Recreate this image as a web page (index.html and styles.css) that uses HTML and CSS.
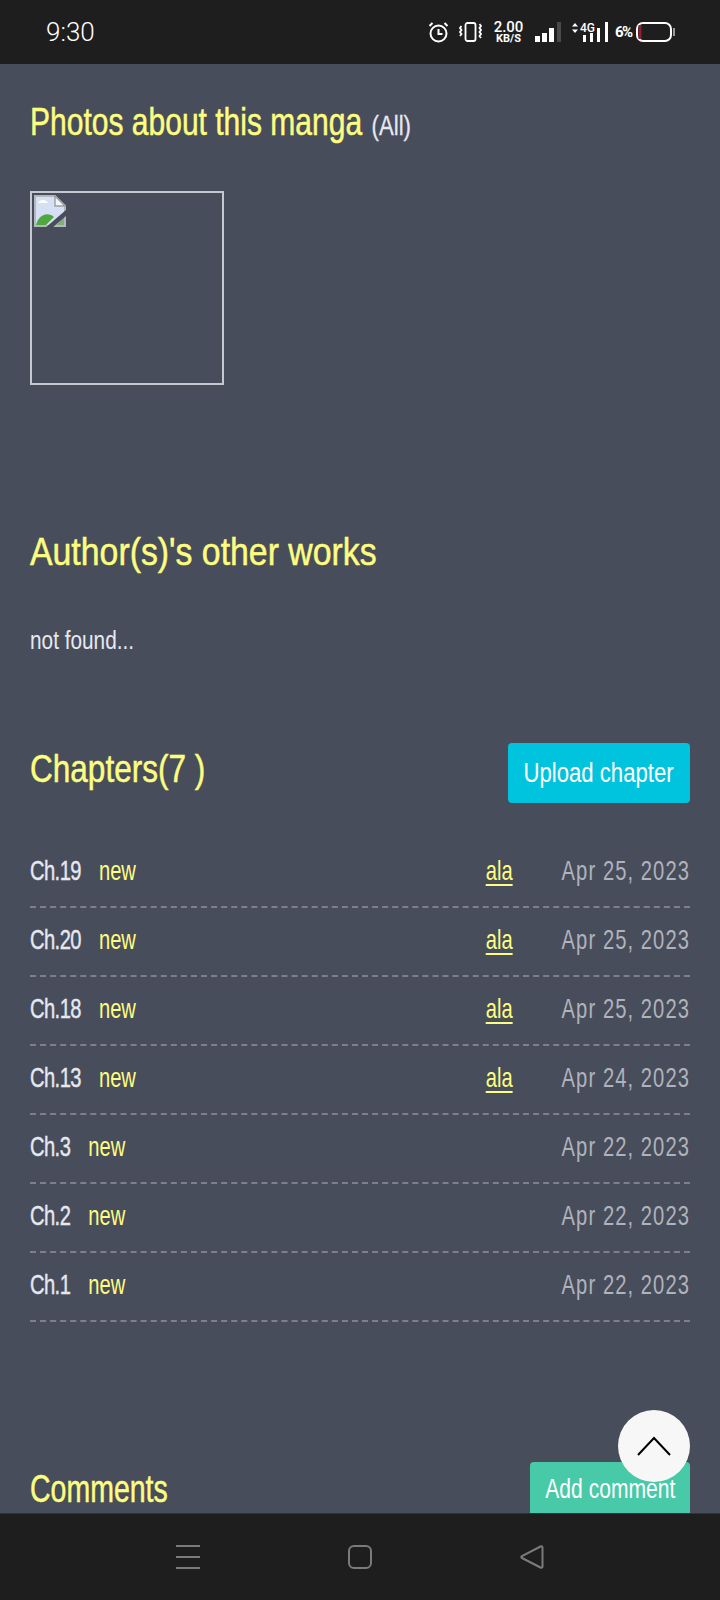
FILE: index.html
```html
<!DOCTYPE html>
<html lang="en">
<head>
    <meta charset="UTF-8">
    <meta name="viewport" content="width=device-width, initial-scale=1.0">
    <title>Manga details</title>
    <link rel="stylesheet" href="styles.css">
</head>
<body>
    <div class="phone">
        <div class="status-bar">
            <span class="clock">9:30</span>
            <div class="status-icons">
                <svg class="ic-alarm" width="21" height="22" viewBox="0 0 21 22" fill="none" stroke="#fff" stroke-width="2">
                    <circle cx="10.500" cy="12.500" r="8"/>
                    <path d="M10.500 8v5h4M1.500 5l3-3M19.500 5l-3-3"/>
                </svg>
                <svg class="ic-vibrate" width="23" height="20" viewBox="0 0 23 20" fill="none" stroke="#fff" stroke-width="1.800">
                    <rect x="6.500" y="1" width="10" height="18" rx="2"/>
                    <path d="M2.500 4l-1.500 2 1.500 2-1.500 2 1.500 2-1.500 2M20.500 2l1.500 2-1.500 2 1.500 2-1.500 2 1.500 2-1.500 2 1.500 2"/>
                </svg>
                <div class="speed"><span class="speed-value">2.00</span><span class="speed-unit">KB/S</span></div>
                <svg class="ic-signal" width="26" height="20" viewBox="0 0 26 20" fill="#fff">
                    <rect x="0" y="14" width="5" height="6"/>
                    <rect x="7" y="11" width="5" height="9"/>
                    <rect x="14" y="6" width="5" height="14"/>
                    <rect x="22" y="0" width="4" height="20" fill="#4a4a4a"/>
                </svg>
                <div class="net">
                    <svg width="6" height="10" viewBox="0 0 6 10" fill="#fff">
                        <path d="M3 0l3 3.500H0zM3 10L0 6.500h6z"/>
                    </svg>
                    <span class="net-label">4G</span>
                    <svg class="net-bars" width="26" height="20" viewBox="0 0 26 20" fill="#fff">
                        <rect x="0" y="13" width="3" height="7"/>
                        <rect x="7" y="11" width="3" height="9"/>
                        <rect x="14" y="6" width="3" height="14"/>
                        <rect x="22" y="0" width="3" height="20"/>
                    </svg>
                </div>
                <span class="batt-text">6%</span>
                <svg class="ic-batt" width="39" height="20" viewBox="0 0 39 20" fill="none">
                    <rect x="1" y="1" width="34" height="18" rx="6" stroke="#fff" stroke-width="2"/>
                    <rect x="2.500" y="3" width="3" height="14" fill="#8a1f35"/>
                    <rect x="37" y="6" width="2" height="8" fill="#999"/>
                </svg>
            </div>
        </div>

        <div class="content">
            <h2 class="title photos-title">Photos about this manga<small class="all-link">(All)</small></h2>
            <div class="photo-box">
                <svg width="32" height="32" viewBox="0 0 16 16">
                    <path d="M.5.5h10l5 5v10H.5z" fill="#d5e0f5" stroke="#b4b7bb"/>
                    <path d="M10.500.5l5 5h-5z" fill="#f2f4f7" stroke="#9a9da3" stroke-width=".7"/>
                    <path d="M2 4c1-2 4-2 5 0z" fill="#fff"/>
                    <path d="M1 15c1-5 6-7 9-4l-4 4z" fill="#4fa83d"/>
                    <path d="M11 15l4-4v4z" fill="#7fb07a"/>
                    <path d="M5.500 16.500L16 7.500v3l-7 6z" fill="#484d5c"/>
                </svg>
            </div>

            <h2 class="title author-title">Author(s)'s other works</h2>
            <p class="not-found">not found...</p>

            <div class="section-head chapters-head">
                <h2 class="title chapters-title">Chapters(7 )</h2>
                <a class="btn btn-upload" href="#"><span class="btn-text">Upload chapter</span></a>
            </div>

            <ul class="chapters">
                <li class="chapter"><div class="ch-line"><span class="ch-name">Ch.19</span><span class="ch-new">new</span><a class="ch-user" href="#">ala</a><span class="ch-date">Apr 25, 2023</span></div></li>
                <li class="chapter"><div class="ch-line"><span class="ch-name">Ch.20</span><span class="ch-new">new</span><a class="ch-user" href="#">ala</a><span class="ch-date">Apr 25, 2023</span></div></li>
                <li class="chapter"><div class="ch-line"><span class="ch-name">Ch.18</span><span class="ch-new">new</span><a class="ch-user" href="#">ala</a><span class="ch-date">Apr 25, 2023</span></div></li>
                <li class="chapter"><div class="ch-line"><span class="ch-name">Ch.13</span><span class="ch-new">new</span><a class="ch-user" href="#">ala</a><span class="ch-date">Apr 24, 2023</span></div></li>
                <li class="chapter"><div class="ch-line"><span class="ch-name">Ch.3</span><span class="ch-new">new</span><span class="ch-date">Apr 22, 2023</span></div></li>
                <li class="chapter"><div class="ch-line"><span class="ch-name">Ch.2</span><span class="ch-new">new</span><span class="ch-date">Apr 22, 2023</span></div></li>
                <li class="chapter"><div class="ch-line"><span class="ch-name">Ch.1</span><span class="ch-new">new</span><span class="ch-date">Apr 22, 2023</span></div></li>
            </ul>

            <div class="section-head comments-head">
                <h2 class="title comments-title">Comments</h2>
                <a class="btn btn-comment" href="#"><span class="btn-text">Add comment</span></a>
            </div>

            <a class="to-top" href="#">
                <svg width="34" height="20" viewBox="0 0 34 20" fill="none" stroke="#000" stroke-width="2">
                    <path d="M1 19L17 2l16 17"/>
                </svg>
            </a>
        </div>

        <div class="nav-bar">
            <svg width="24" height="24" viewBox="0 0 24 24" stroke="#7b7b7b" stroke-width="2">
                <path d="M0 1h24M0 12h24M0 23h24"/>
            </svg>
            <svg width="24" height="24" viewBox="0 0 24 24" fill="none" stroke="#7b7b7b" stroke-width="2">
                <rect x="1" y="1" width="22" height="22" rx="5"/>
            </svg>
            <svg width="24" height="24" viewBox="0 0 24 24" fill="none" stroke="#7b7b7b" stroke-width="2">
                <path d="M22.500 2.500c0-1-1-1.500-2-1L2 11c-1 .6-1 1.500 0 2l18.500 9.500c1 .5 2 0 2-1z"/>
            </svg>
        </div>
    </div>
</body>
</html>
```

FILE: styles.css
```css
* {
    box-sizing: border-box;
}
html, body {
    margin: 0;
    padding: 0;
}
.phone {
    width: 720px;
    height: 1600px;
    display: flex;
    flex-direction: column;
    background: #484d5c;
    font-family: "Liberation Sans", sans-serif;
    overflow: hidden;
}

/* status bar */
.status-bar {
    height: 64px;
    flex: none;
    display: flex;
    justify-content: space-between;
    align-items: center;
    padding: 0 45px 0 46px;
    background: #1e1e1e;
    color: #fff;
    font-family: Roboto, sans-serif;
}
.clock {
    font-size: 26px;
    font-weight: 300;
}
.status-icons {
    display: flex;
    align-items: center;
}
.ic-vibrate {
    margin-left: 10px;
}
.speed {
    display: flex;
    flex-direction: column;
    align-items: center;
    width: 33px;
    margin-left: 10px;
}
.speed-value {
    font-size: 15px;
    font-weight: 500;
    line-height: 12px;
}
.speed-unit {
    font-size: 11px;
    line-height: 11px;
    font-weight: 700;
}
.ic-signal {
    margin-left: 10px;
}
.net {
    display: flex;
    align-items: flex-start;
    position: relative;
    width: 37px;
    height: 20px;
    margin-left: 11px;
    padding-top: 1px;
}
.net-label {
    margin-left: 2px;
    font-size: 12px;
    font-weight: 500;
    line-height: 10px;
}
.net-bars {
    position: absolute;
    right: 0;
    top: 0;
}
.batt-text {
    width: 16px;
    margin-left: 6px;
    font-size: 15px;
    font-weight: 700;
    letter-spacing: -1.500px;
}
.ic-batt {
    margin-left: 5px;
}

/* main page */
.content {
    flex: 1;
    position: relative;
    overflow: hidden;
    padding: 0 30px;
}
.title {
    margin: 0;
    color: #fdfd80;
    font-size: 38px;
    font-weight: 400;
    line-height: 44px;
    white-space: nowrap;
    transform-origin: left;
    -webkit-text-stroke: .5px #fdfd80;
}
.photos-title {
    padding-top: 36px;
    transform: scaleX(.79);
}
.all-link {
    margin-left: 12px;
    color: #e6e8ef;
    font-size: 28px;
    -webkit-text-stroke: .3px #e6e8ef;
}
.photo-box {
    width: 194px;
    height: 194px;
    margin-top: 43px;
    padding: 2px;
    border: 2px solid #c5c8d0;
}
.photo-box svg {
    display: block;
}
.author-title {
    margin-top: 145px;
    transform: scaleX(.89);
}
.not-found {
    margin: 50px 0 0;
    color: #e6e8ef;
    font-size: 26px;
    line-height: 32px;
    transform: scaleX(.8);
    transform-origin: left;
}
.section-head {
    display: flex;
    justify-content: space-between;
    align-items: center;
}
.chapters-head {
    margin-top: 87px;
    height: 60px;
}
.chapters-title {
    margin-bottom: 8px;
    transform: scaleX(.83);
}
.btn {
    display: flex;
    align-items: center;
    justify-content: center;
    flex: none;
    color: #fff;
    font-size: 27px;
    text-decoration: none;
    border-radius: 4px;
}
.btn-text {
    white-space: nowrap;
}
.btn-upload {
    width: 182px;
    height: 60px;
    background: #00c4de;
}
.btn-upload .btn-text {
    transform: scaleX(.82);
}
.chapters {
    list-style: none;
    margin: 36px 0 0;
    padding: 0;
}
.chapter {
    display: flex;
    align-items: center;
    height: 69px;
    padding-bottom: 4px;
    border-bottom: 2px dashed #7d808c;
}
/* the row text is squeezed as a whole, the dashed line stays full width */
.ch-line {
    display: flex;
    flex: none;
    width: calc(100% / .72);
    font-size: 28px;
    white-space: nowrap;
    transform: scaleX(.72);
    transform-origin: left;
}
.ch-name {
    color: #e6e8ef;
    letter-spacing: -.8px;
    -webkit-text-stroke: .4px #e6e8ef;
}
.ch-new {
    margin-left: 25px;
    color: #fdfd80;
}
.ch-user {
    margin-left: auto;
    color: #fdfd80;
    text-decoration-thickness: 2px;
    text-underline-offset: 4px;
}
.ch-date {
    margin-left: auto;
    color: #b0b3bb;
    letter-spacing: 1.500px;
}
.ch-user + .ch-date {
    margin-left: 68px;
}
.comments-head {
    margin-top: 140px;
    align-items: flex-start;
}
.comments-title {
    margin-top: 5px;
    transform: scaleX(.75);
}
.btn-comment {
    width: 160px;
    height: 60px;
    padding-bottom: 6px;
    background: #48c9a8;
}
.btn-comment .btn-text {
    transform: scaleX(.78);
}
.to-top {
    position: absolute;
    right: 30px;
    top: 1346px;
    width: 72px;
    height: 72px;
    display: flex;
    align-items: center;
    justify-content: center;
    border-radius: 50%;
    background: #f7f7f7;
}

/* nav bar */
.nav-bar {
    height: 87px;
    flex: none;
    display: flex;
    align-items: center;
    justify-content: center;
    gap: 148px;
    background: #1e1e1e;
    border-top: 1px solid #333;
}
```
